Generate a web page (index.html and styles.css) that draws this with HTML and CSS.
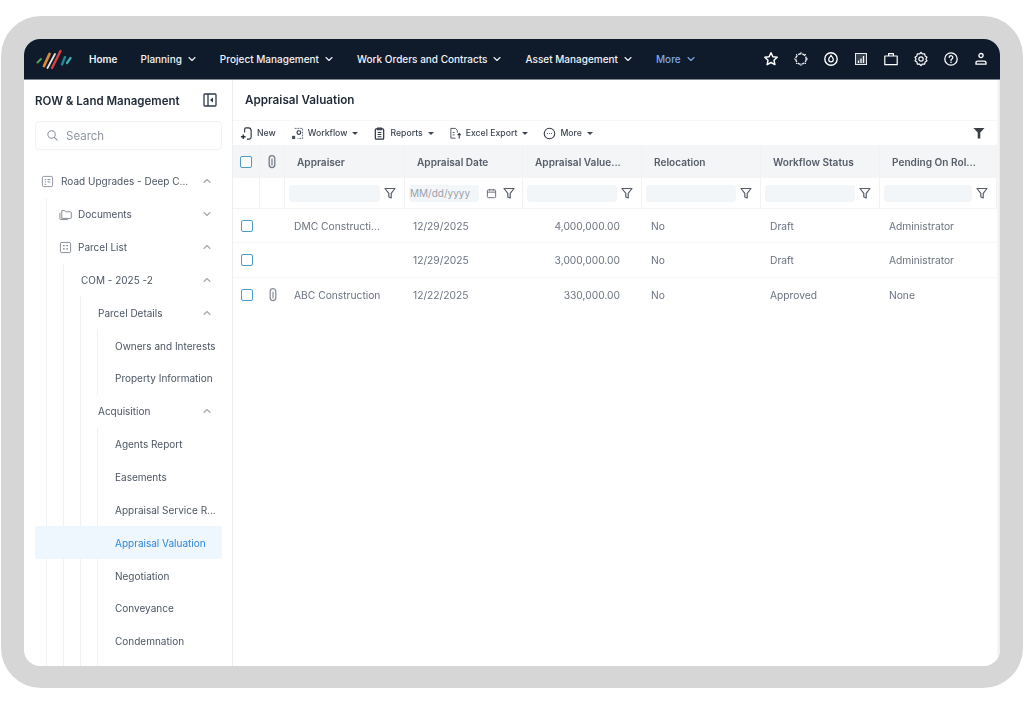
FILE: index.html
```html
<!DOCTYPE html>
<html lang="en">
<head>
<meta charset="utf-8">
<title>Appraisal Valuation</title>
<link rel="stylesheet" href="styles.css">
</head>
<body>
<svg class="sprites" aria-hidden="true">
  <symbol id="chev" viewBox="0 0 10 10"><path d="M2 3.500 5 6.500 8 3.500" fill="none" stroke="currentColor" stroke-width="1.100" stroke-linecap="round" stroke-linejoin="round"/></symbol>
  <symbol id="funnel" viewBox="0 0 12 12"><path d="M1 1.500h10L7.200 6.400V11L4.800 10V6.400Z" fill="none" stroke="currentColor" stroke-width="1.200" stroke-linejoin="round"/></symbol>
  <symbol id="clip" viewBox="0 0 12 14"><path d="M8.800 4.500v5.300a2.800 2.800 0 0 1-5.600 0V3.500a2.800 2.800 0 0 1 5.600 0" fill="none" stroke="currentColor" stroke-width="1.300" stroke-linecap="round"/><path d="M6 4v6" stroke="currentColor" stroke-width="1.200" stroke-linecap="round"/></symbol>
</svg>
<div class="frame">
  <div class="screen">
    <header class="nav">
      <svg class="logo" viewBox="0 0 38 22" width="38" height="22" aria-hidden="true">
        <g fill="none" stroke-linecap="round">
          <path d="M2.500 14.500 6 11" stroke="#4fa35c" stroke-width="2"/>
          <path d="M9 18 14.500 6" stroke="#d58a3a" stroke-width="2.800"/>
          <path d="M12.500 20 20 6" stroke="#e8e6e0" stroke-width="1.800"/>
          <path d="M17 20 25.500 3" stroke="#d8423f" stroke-width="2.400"/>
          <path d="M27 16.500 30 9" stroke="#1f8a94" stroke-width="2.400"/>
          <path d="M32 15 35.500 10" stroke="#37b3b8" stroke-width="2.200"/>
        </g>
      </svg>
      <nav class="menu">
        <span class="menu-item home">Home</span>
        <span class="menu-item">Planning <svg class="mchev"><use href="#chev"/></svg></span>
        <span class="menu-item">Project Management <svg class="mchev"><use href="#chev"/></svg></span>
        <span class="menu-item">Work Orders and Contracts <svg class="mchev"><use href="#chev"/></svg></span>
        <span class="menu-item">Asset Management <svg class="mchev"><use href="#chev"/></svg></span>
        <span class="menu-item more">More <svg class="mchev"><use href="#chev"/></svg></span>
      </nav>
      <div class="nav-icons">
        <svg viewBox="0 0 16 16"><path d="M8 1.800l1.900 4 4.300.5-3.200 3 .9 4.300L8 11.500l-3.900 2.100.9-4.300-3.200-3 4.300-.5Z" fill="none" stroke="#fff" stroke-width="1.500" stroke-linejoin="round"/></svg>
        <svg viewBox="0 0 16 16"><circle cx="8" cy="8" r="5.200" fill="none" stroke="#e6e8ec" stroke-width="1.400" stroke-dasharray="3.200 1"/><path d="M8 1v1.500M13 3l-1 1M3 3l1 1M15 8h-1.500M2.500 8H1M13 13l-1-1M3 13l1-1M8 15v-1.500" stroke="#e6e8ec" stroke-width="1"/></svg>
        <svg viewBox="0 0 16 16"><circle cx="8" cy="8" r="6.200" fill="none" stroke="#fff" stroke-width="1.400"/><path d="M8 4.300c1.500 1.800 2.300 3 2.300 4.200a2.300 2.300 0 0 1-4.600 0C5.700 7.300 6.500 6.100 8 4.300Z" fill="none" stroke="#fff" stroke-width="1.200"/></svg>
        <svg viewBox="0 0 16 16"><rect x="2.500" y="2.500" width="11" height="11" fill="#3a4352" stroke="#e6e8ec" stroke-width="1"/><path d="M5.500 12V9.500M8 12V7.500M10.500 12V5" stroke="#fff" stroke-width="1.300"/></svg>
        <svg viewBox="0 0 16 16"><path d="M1.800 5h12.400v8.700H1.800ZM5.600 5V2.600h4.800V5" fill="none" stroke="#fff" stroke-width="1.200" stroke-linejoin="round"/></svg>
        <svg viewBox="0 0 16 16"><path d="M8 1.300l1.500 1.700 2.200-.2.400 2.200 1.900 1.200L12.900 8l1.100 1.800-1.900 1.200-.4 2.200-2.200-.2L8 14.700 6.500 13l-2.200.2-.4-2.200L2 9.800 3.100 8 2 6.200l1.900-1.200.4-2.200 2.200.2Z" fill="none" stroke="#fff" stroke-width="1.200" stroke-linejoin="round"/><circle cx="8" cy="8" r="2.200" fill="none" stroke="#fff" stroke-width="1.200"/></svg>
        <svg viewBox="0 0 16 16"><circle cx="8" cy="8" r="6.200" fill="none" stroke="#fff" stroke-width="1.300"/><path d="M6.200 6.400a1.800 1.800 0 1 1 2.700 1.600c-.6.400-.9.700-.9 1.400" fill="none" stroke="#fff" stroke-width="1.200" stroke-linecap="round"/><circle cx="8" cy="11.300" r=".8" fill="#fff"/></svg>
        <svg viewBox="0 0 16 16"><circle cx="8" cy="4.600" r="2.100" fill="none" stroke="#fff" stroke-width="1.300"/><path d="M3 13.200v-1.400c0-1 .9-1.700 2-1.700h6c1.100 0 2 .7 2 1.700v1.400Z" fill="none" stroke="#fff" stroke-width="1.300" stroke-linejoin="round"/></svg>
      </div>
    </header>
    <div class="body">
      <aside class="side">
        <div class="side-head">
          <h2 class="side-title">ROW &amp; Land Management</h2>
          <svg class="collapse" viewBox="0 0 14 14"><rect x="1" y="1" width="12" height="12" rx="1" fill="none" stroke="#2f3a48" stroke-width="1.300"/><path d="M5 1v12" stroke="#2f3a48" stroke-width="1.300"/><path d="M10 4.500v5L7 7Z" fill="#2f3a48"/></svg>
        </div>
        <div class="search">
          <svg viewBox="0 0 14 14"><circle cx="6" cy="6" r="4" fill="none" stroke="#8b929b" stroke-width="1.100"/><path d="M9 9l3 3" stroke="#8b929b" stroke-width="1.100" stroke-linecap="round"/></svg>
          <span>Search</span>
        </div>
        <div class="tree">
          <div class="row root">
            <svg class="ti" viewBox="0 0 14 14"><rect x="1.500" y="1.500" width="11" height="11" rx="1.500" fill="none" stroke="#8a9099" stroke-width="1"/><path d="M4 5h1.500M7 5h3M4 7.500h1.500M7 7.500h3M4 10h1.500" stroke="#7a8089" stroke-width="1"/></svg>
            <span class="lbl">Road Upgrades - Deep C...</span><svg class="tc up"><use href="#chev"/></svg>
          </div>
          <div class="kids k1">
            <div class="row">
              <svg class="ti folder" viewBox="0 0 15 14"><path d="M3.500 2.800h3l1 1.300h5.500a.8.800 0 0 1 .8.800v5.500a.8.800 0 0 1-.8.800h-9.500Z" fill="none" stroke="#80868f" stroke-width="1"/><path d="M1.500 5v6.500a1 1 0 0 0 1 1H10" fill="none" stroke="#80868f" stroke-width="1"/></svg>
              <span class="lbl">Documents</span><svg class="tc"><use href="#chev"/></svg>
            </div>
            <div class="row grid-row">
              <svg class="ti" viewBox="0 0 14 14"><rect x="1.500" y="1.500" width="11" height="11" rx="1.500" fill="none" stroke="#80868f" stroke-width="1"/><path d="M4.500 5h1.500M8 5h1.500M4.500 8.500h1.500M8 8.500h1.500" stroke="#5f656e" stroke-width="1.500"/></svg>
              <span class="lbl">Parcel List</span><svg class="tc up"><use href="#chev"/></svg>
            </div>
            <div class="kids k2">
              <div class="row"><span class="lbl">COM - 2025 -2</span><svg class="tc up"><use href="#chev"/></svg></div>
              <div class="kids k3">
                <div class="row"><span class="lbl">Parcel Details</span><svg class="tc up"><use href="#chev"/></svg></div>
                <div class="kids k4">
                  <div class="row"><span class="lbl">Owners and Interests</span></div>
                  <div class="row"><span class="lbl">Property Information</span></div>
                </div>
                <div class="row"><span class="lbl">Acquisition</span><svg class="tc up"><use href="#chev"/></svg></div>
                <div class="kids k4">
                  <div class="row"><span class="lbl">Agents Report</span></div>
                  <div class="row"><span class="lbl">Easements</span></div>
                  <div class="row"><span class="lbl">Appraisal Service R...</span></div>
                  <div class="row selected"><span class="lbl">Appraisal Valuation</span></div>
                  <div class="row"><span class="lbl">Negotiation</span></div>
                  <div class="row"><span class="lbl">Conveyance</span></div>
                  <div class="row"><span class="lbl">Condemnation</span></div>
                  <div class="row"></div>
                </div>
              </div>
            </div>
          </div>
        </div>
      </aside>
      <main class="main">
        <h1 class="title">Appraisal Valuation</h1>
        <div class="toolbar">
          <span class="tool"><svg viewBox="0 0 14 14"><path d="M5 6V2.500A1.500 1.500 0 0 1 6.500 1H9a3 3 0 0 1 3 3v7a2 2 0 0 1-2 2H7.500" fill="none" stroke="#2b3340" stroke-width="1.200"/><path d="M3.500 8v5M1 10.500h5" stroke="#2b3340" stroke-width="1.500"/></svg>New</span>
          <span class="tool"><svg viewBox="0 0 14 14"><path d="M4 1.500h8.500v11H7" fill="none" stroke="#5f6670" stroke-width="1" stroke-dasharray="2 1"/><circle cx="8.500" cy="6" r="2" fill="none" stroke="#2b3340" stroke-width="1.200"/><rect x="1" y="9.500" width="3.500" height="3.500" fill="#4a525e"/></svg>Workflow<i class="caret"></i></span>
          <span class="tool"><svg viewBox="0 0 14 14"><rect x="2.500" y="2" width="9" height="11" rx="1" fill="none" stroke="#2b3340" stroke-width="1.300"/><path d="M5 1h4v2H5ZM5 6h4M5 8h4M5 10.500h4" fill="none" stroke="#2b3340" stroke-width="1.100"/></svg>Reports<i class="caret"></i></span>
          <span class="tool"><svg viewBox="0 0 14 14"><path d="M7 12H2V1.500h5l2 2V6" fill="none" stroke="#4a525e" stroke-width="1"/><path d="M11 12.500V7M9.300 8.700 11 7l1.700 1.700" fill="none" stroke="#2b3340" stroke-width="1.100"/><path d="M4 6h2M4 8.500h2" stroke="#4a525e"/></svg>Excel Export<i class="caret"></i></span>
          <span class="tool"><svg viewBox="0 0 14 14"><circle cx="7" cy="7" r="5.700" fill="none" stroke="#2b3340" stroke-width="1.100"/><path d="M4.300 7h.8M6.600 7h.8M8.900 7h.8" stroke="#2b3340" stroke-width="1.300"/></svg>More<i class="caret"></i></span>
          <svg class="tool-filter" viewBox="0 0 12 12"><path d="M.5 1h11L7.300 5.600V11.500H4.700V5.600Z" fill="#3a3f47"/></svg>
        </div>
        <div class="grid head">
          <div class="cell"><i class="check"></i></div>
          <div class="cell"><svg class="clip"><use href="#clip"/></svg></div>
          <div class="cell txt">Appraiser</div>
          <div class="cell txt">Appraisal Date</div>
          <div class="cell txt">Appraisal Value...</div>
          <div class="cell txt">Relocation</div>
          <div class="cell txt">Workflow Status</div>
          <div class="cell txt">Pending On Rol...</div>
        </div>
        <div class="grid filters">
          <div class="cell"></div>
          <div class="cell"></div>
          <div class="cell f"><i class="input"></i><svg class="fn"><use href="#funnel"/></svg></div>
          <div class="cell f"><span class="input date">MM/dd/yyyy</span><svg class="cal" viewBox="0 0 12 12"><rect x="1.500" y="2" width="9" height="8.500" rx="1" fill="none" stroke="#5f6670"/><path d="M1.500 4.500h9M4 1v2M8 1v2" stroke="#5f6670"/></svg><svg class="fn"><use href="#funnel"/></svg></div>
          <div class="cell f"><i class="input"></i><svg class="fn"><use href="#funnel"/></svg></div>
          <div class="cell f"><i class="input"></i><svg class="fn"><use href="#funnel"/></svg></div>
          <div class="cell f"><i class="input"></i><svg class="fn"><use href="#funnel"/></svg></div>
          <div class="cell f"><i class="input"></i><svg class="fn"><use href="#funnel"/></svg></div>
        </div>
        <div class="grid data">
          <div class="cell"><i class="check"></i></div><div class="cell"></div>
          <div class="cell d">DMC Constructi...</div><div class="cell d">12/29/2025</div><div class="cell d num">4,000,000.00</div><div class="cell d">No</div><div class="cell d">Draft</div><div class="cell d">Administrator</div>
        </div>
        <div class="grid data">
          <div class="cell"><i class="check"></i></div><div class="cell"></div>
          <div class="cell d"></div><div class="cell d">12/29/2025</div><div class="cell d num">3,000,000.00</div><div class="cell d">No</div><div class="cell d">Draft</div><div class="cell d">Administrator</div>
        </div>
        <div class="grid data last">
          <div class="cell"><i class="check"></i></div><div class="cell"><svg class="clip thin"><use href="#clip"/></svg></div>
          <div class="cell d">ABC Construction</div><div class="cell d">12/22/2025</div><div class="cell d num">330,000.00</div><div class="cell d">No</div><div class="cell d">Approved</div><div class="cell d">None</div>
        </div>
      </main>
    </div>
  </div>
</div>
</body>
</html>
```
FILE: styles.css
```css
* { box-sizing: border-box; }
html, body { margin: 0; height: 100%; background: #fff; overflow: hidden; }
body { font-family: Inter, "Liberation Sans", sans-serif; }
.sprites { display: none; }

.frame { height: 672px; margin: 16px 1px 0; padding: 23px 23px 22px; background: #d6d6d6; border-radius: 40px; }
.screen { height: 100%; display: flex; flex-direction: column; background: #fff; border-radius: 16px; overflow: hidden; filter: blur(.45px); }

.nav { flex: none; height: 41px; display: flex; align-items: center; padding-left: 11px; background: #0f1a2b; border-bottom: 1px solid #7f858d; }
.logo { flex: none; margin-right: 16px; }
.menu { display: flex; gap: 23px; flex: 1; }
.menu-item { display: flex; align-items: center; gap: 5px; font-size: 10px; font-weight: 500; color: #f1f3f6; white-space: nowrap; }
.home { font-weight: 600; }
.more { color: #7fa8e6; }
.mchev { width: 10px; height: 10px; }
.nav-icons { display: flex; gap: 14px; padding-right: 11px; }
.nav-icons svg { width: 16px; height: 16px; }

.body { flex: 1; min-height: 0; display: flex; }
.side { flex: none; width: 209px; padding-left: 11px; padding-right: 10px; border-right: 1px solid #eceef0; overflow: hidden; }
.side-head { height: 41px; display: flex; align-items: center; justify-content: space-between; padding-right: 5px; }
.side-title { margin: 0; font-size: 11.500px; font-weight: 600; color: #1f2937; }
.collapse { width: 14px; height: 14px; margin-top: -2px; }
.search { height: 29px; display: flex; align-items: center; gap: 7px; padding-left: 10px; border: 1px solid #f1f2f4; border-radius: 4px; font-size: 11.500px; color: #8f959d; }
.search svg { width: 13px; height: 13px; }
.tree { margin-top: 15px; }
.row { position: relative; height: 32.850px; display: flex; align-items: center; font-size: 10px; color: #4b5563; padding-right: 10px; }
.lbl { position: relative; flex: 1; white-space: nowrap; }
.root { padding-left: 6px; }
.ti { width: 13px; height: 13px; margin-right: 7px; flex: none; }
.folder { width: 15px; margin-right: 5px; }
.grid-row { padding-left: 1px; }
.grid-row .ti { margin-right: 6px; }
.tc { position: relative; flex: none; width: 10px; height: 10px; color: #a3a8af; }
.up { transform: rotate(180deg); }
.kids { border-left: 1px solid #f0f1f3; }
.k1 { margin-left: 11px; padding-left: 11px; }
.k2 { margin-left: 5px; padding-left: 17px; }
.k3 { margin-left: -1px; padding-left: 17px; }
.k4 { margin-left: -1px; padding-left: 17px; }
.selected { color: #2f86d6; }
.selected::before { content: ""; position: absolute; top: 0; bottom: 0; left: -80px; right: 0; background: #eef6fe; border-radius: 2px; }

.main { flex: 1; min-width: 0; padding-right: 3px; box-shadow: inset -4px 0 3px -2px #ececec; }
.title { height: 41px; margin: 0; padding-left: 12px; display: flex; align-items: center; font-size: 11.700px; font-weight: 600; color: #1f2937; border-bottom: 1px solid #f6f7f8; }
.toolbar { height: 24px; display: flex; align-items: center; gap: 15px; padding: 0 12px 0 7px; font-size: 8.700px; font-weight: 500; color: #3d4550; }
.tool { display: flex; align-items: center; gap: 4px; white-space: nowrap; }
.tool svg { width: 13px; height: 13px; }
.caret { width: 0; height: 0; margin-left: 1px; border: 3px solid transparent; border-top: 3px solid #3d4550; border-bottom: 0; }
.tool-filter { width: 12px; height: 12px; margin-left: auto; }

.grid { display: grid; grid-template-columns: 27px 25px 120px 118px 119px 119px 119px 1fr; }
.cell { display: flex; align-items: center; min-width: 0; border-right: 1px solid #f1f2f4; white-space: nowrap; }
.grid > .cell:nth-child(-n+2) { justify-content: center; }
.head { height: 33px; background: #f3f5f7; font-size: 10.100px; font-weight: 600; color: #565d68; }
.txt { padding-left: 12px; }
.filters { height: 31px; border-bottom: 1px solid #f3f4f5; }
.f { padding-left: 4px; gap: 4px; }
.input { flex: 1; min-width: 0; height: 17px; background: #f3f6f9; border-radius: 3px; }
.date { flex: 0 0 70px; padding-left: 1px; font-size: 10px; line-height: 17px; color: #9aa1aa; }
.cal { width: 11px; height: 11px; flex: none; margin-left: 3px; margin-right: 2px; }
.fn { width: 12px; height: 12px; flex: none; margin-right: 8px; color: #565d68; }
.check { width: 12px; height: 12px; border: 1.800px solid #4d9bc9; border-radius: 2px; background: #fff; }
.clip { width: 12px; height: 14px; color: #727983; }
.thin { color: #8a9099; }
.data { height: 34.400px; border-bottom: 1px solid #f6f7f8; font-size: 10.250px; color: #6b7280; }
.last { border-bottom: 0; }
.data .cell { border-right: 0; }
.d { padding-left: 9px; }
.data .d:nth-child(4) { padding-left: 8px; }
.num { justify-content: flex-end; padding-right: 22px; }
```
